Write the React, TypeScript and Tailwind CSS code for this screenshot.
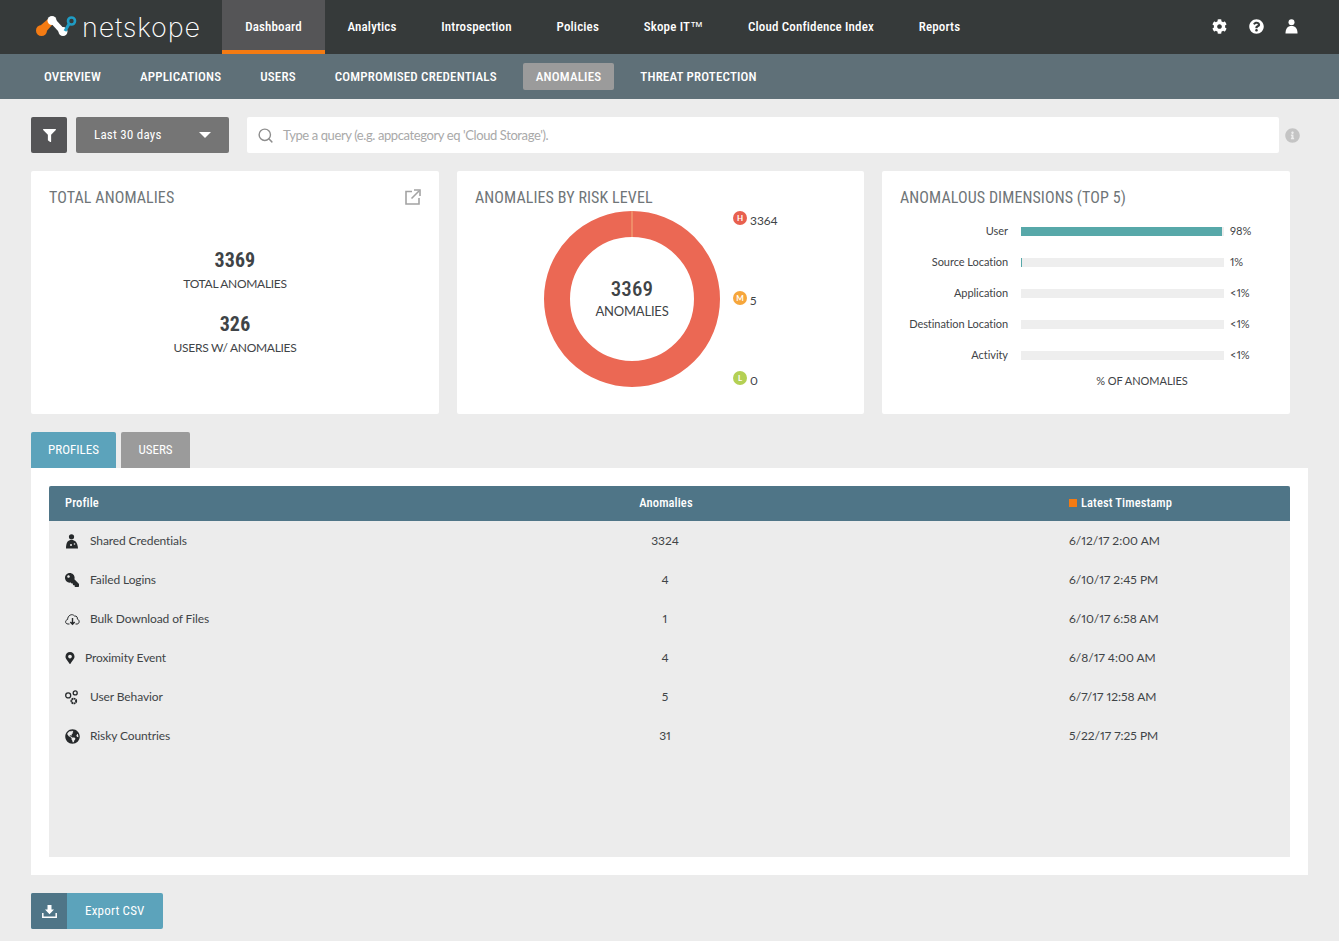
import { Search } from 'lucide-react';
import { FaCog, FaFilter, FaGlobeAmericas, FaInfoCircle, FaKey, FaMapMarkerAlt, FaQuestionCircle } from 'react-icons/fa';
import React from 'react';

const cond = "font-['Roboto_Condensed','Roboto',sans-serif]";

const topNav = ['Analytics', 'Introspection', 'Policies', 'Skope IT', 'Cloud Confidence Index', 'Reports'];
const subNav = ['OVERVIEW', 'APPLICATIONS', 'USERS', 'COMPROMISED CREDENTIALS', 'ANOMALIES', 'THREAT PROTECTION'];

const dimensions = [
    { label: 'User', pct: '98%', fill: 201 },
    { label: 'Source Location', pct: '1%', fill: 1 },
    { label: 'Application', pct: '<1%', fill: 0 },
    { label: 'Destination Location', pct: '<1%', fill: 0 },
    { label: 'Activity', pct: '<1%', fill: 0 },
];

function Logo() {
    return (
        <div className="flex w-[222px] items-center pl-[36px]">
            <svg width="41" height="21" viewBox="0 0 41 21" className="mb-[2px] shrink-0">
                <path d="M5 9 L12 3 L16 9 L9 17 Z" fill="#f47b13" />
                <circle cx="5.5" cy="14.5" r="5.5" fill="#f47b13" />
                <path d="M16 4 L27 16" stroke="#fff" strokeWidth="6" />
                <circle cx="16" cy="4.5" r="4.5" fill="#fff" />
                <circle cx="27" cy="15.5" r="4.5" fill="#fff" />
                <path d="M29 15 L33 8" stroke="#1f9cc4" strokeWidth="3" />
                <circle cx="35.5" cy="5" r="3.5" fill="none" stroke="#1f9cc4" strokeWidth="2.6" />
            </svg>
            <span className="ml-[5px] font-['Inter',sans-serif] text-[27px] leading-none font-extralight tracking-[0.8px] text-white">netskope</span>
        </div>
    );
}

function UserIcon() {
    return (
        <svg width="13" height="15" viewBox="0 0 13 15" fill="#fff">
            <circle cx="6.5" cy="3.2" r="3" />
            <path d="M0.5 14.5 C0.5 9.5 2.5 7 6.5 7 C10.5 7 12.5 9.5 12.5 14.5 Z" />
        </svg>
    );
}

function PopOutIcon() {
    return (
        <svg width="16" height="16" viewBox="0 0 16 16" fill="none" stroke="#a3a3a3" strokeWidth="1.6">
            <path d="M7 2.5 H1 V15 H14 V9" />
            <path d="M6.5 9.5 L14 2" />
            <path d="M9 1 H15 V7" />
        </svg>
    );
}

function ExportIcon() {
    return (
        <svg width="15" height="13" viewBox="0 0 15 13" fill="#fff">
            <path d="M5.5 0 H9.5 V4.5 H12 L7.5 9.2 L3 4.5 H5.5 Z" />
            <path d="M0.8 8 V12.2 H14.2 V8" fill="none" stroke="#fff" strokeWidth="1.5" />
        </svg>
    );
}

function CredentialIcon() {
    return (
        <svg width="14" height="15" viewBox="0 0 14 15" fill="#26292b">
            <circle cx="6.5" cy="2.8" r="2.6" />
            <path d="M1 14.5 C1 8 3 6 6.5 6 C10 6 12.5 8 13 14.5 Z" />
            <circle cx="6" cy="11" r="1" fill="#ececec" />
            <circle cx="9.5" cy="10" r="0.8" fill="#ececec" />
        </svg>
    );
}

function CloudIcon() {
    return (
        <svg width="15" height="14" viewBox="0 0 15 13" fill="none" stroke="#26292b" strokeWidth="1">
            <path d="M4.5 11.5 H3 C-0.2 11.5 0 7.5 2.6 7 C2.6 3 7 0.5 9.5 3.5 C12 3 12.7 5.5 12.3 6.5 C15 7.5 14.6 11.5 12 11.5 H10.5" />
            <path d="M7.5 5.5 V11.5 M5.3 9.4 L7.5 11.7 L9.7 9.4" strokeWidth="1.4" />
        </svg>
    );
}

function GearsIcon() {
    return (
        <svg width="14" height="15" viewBox="0 0 14 15" fill="none" stroke="#26292b" strokeWidth="1.3">
            <circle cx="3.2" cy="5.4" r="2.5" />
            <circle cx="10.2" cy="2.9" r="2" />
            <circle cx="8.8" cy="11" r="2.4" strokeDasharray="1.6 0.4" strokeWidth="1.9" />
        </svg>
    );
}

const rows = [
    { name: 'Shared Credentials', count: '3324', time: '6/12/17 2:00 AM', icon: <CredentialIcon /> },
    { name: 'Failed Logins', count: '4', time: '6/10/17 2:45 PM', icon: <FaKey className="-scale-x-100 text-[14px] text-[#26292b]" /> },
    { name: 'Bulk Download of Files', count: '1', time: '6/10/17 6:58 AM', icon: <CloudIcon /> },
    { name: 'Proximity Event', count: '4', time: '6/8/17 4:00 AM', icon: <FaMapMarkerAlt className="-ml-[1px] text-[12px] text-[#26292b]" />, short: true },
    { name: 'User Behavior', count: '5', time: '6/7/17 12:58 AM', icon: <GearsIcon /> },
    { name: 'Risky Countries', count: '31', time: '5/22/17 7:25 PM', icon: <FaGlobeAmericas className="text-[15px] text-[#26292b]" /> },
];

function Risk({ letter, value, color }: { letter: string; value: string; color: string }) {
    return (
        <div className="flex items-start">
            <span className={`flex h-[14px] w-[14px] items-center justify-center rounded-full text-[8px] font-bold text-white ${color}`}>{letter}</span>
            <span className="mt-[3px] ml-[3px] text-[12px] leading-[14px] text-[#3f4447]">{value}</span>
        </div>
    );
}

export default function App() {
    return (
        <div className="h-[941px] w-[1339px] overflow-hidden bg-[#ececec] font-['Lato',sans-serif] text-[#3f4447] proportional-nums">
            {/* Barra principal */}
            <header className={`flex h-[54px] bg-[#363a3a] text-white ${cond}`}>
                <Logo />
                <a className="flex w-[103px] items-center justify-center border-b-4 border-[#f47b13] bg-[#555557] pt-[4px] text-[13px] font-medium tracking-[0.15px]">Dashboard</a>
                <nav className="flex">
                    {topNav.map((item) => (
                        <a key={item} className="flex items-center px-[22.4px] text-[13px] font-medium tracking-[0.15px]">
                            {item}
                            {item === 'Skope IT' && <span className="font-['Liberation_Sans',sans-serif]">™</span>}
                        </a>
                    ))}
                </nav>
                <div className="ml-auto flex items-center gap-[21.5px] pr-[41px] pb-[2px]">
                    <FaCog className="text-[15px]" />
                    <FaQuestionCircle className="text-[15px]" />
                    <UserIcon />
                </div>
            </header>

            {/* Submenu */}
            <div className={`flex h-[45px] items-center gap-[13px] bg-[#5f7078] pl-[31px] text-white ${cond}`}>
                {subNav.map((item) => (
                    <a key={item} className={`flex h-[27px] items-center rounded-[2px] px-[13px] text-[13px] font-medium tracking-[0.18px] ${item === 'ANOMALIES' ? 'bg-[#9b9b9b]' : ''}`}>
                        {item}
                    </a>
                ))}
            </div>

            {/* Filtros */}
            <div className="flex items-center pt-[18px] pl-[31px]">
                <button className="flex h-[36px] w-[36px] items-center justify-center rounded-[2px] bg-[#555557] text-white">
                    <FaFilter className="text-[13px]" />
                </button>
                <button className={`ml-[9px] flex h-[36px] w-[153px] items-center justify-between rounded-[2px] bg-[#757575] pr-[18px] pl-[18px] text-[13px] tracking-[0.2px] text-white ${cond}`}>
                    Last 30 days
                    <span className="h-0 w-0 border-x-[6px] border-t-[6px] border-x-transparent border-t-white" />
                </button>
                <div className="ml-[18px] flex h-[36px] w-[1032px] items-center rounded-[2px] bg-white pl-[10px] text-[13px] text-[#a9a9a9]">
                    <Search size={17} strokeWidth={2} className="text-[#8e8e8e]" />
                    <span className="mt-[1px] ml-[9px] tracking-[-0.4px]">Type a query (e.g. appcategory eq 'Cloud Storage').</span>
                </div>
                <FaInfoCircle className="ml-[6px] text-[15px] text-[#c4c4c4]" />
            </div>

            {/* Tarjetas */}
            <div className="mt-[18px] ml-[31px] flex gap-[18px]">
                <section className="relative h-[243px] w-[408px] rounded-[2px] bg-white pt-[16px] pl-[18px]">
                    <h2 className={`text-[16px] leading-[21px] tracking-[0.1px] text-[#6f7578] ${cond}`}>TOTAL ANOMALIES</h2>
                    <div className="absolute top-[18px] right-[18px]">
                        <PopOutIcon />
                    </div>
                    <div className="mt-[38px] pr-[18px] text-center">
                        <p className={`text-[20px] leading-[28px] font-bold text-[#3f4447] ${cond}`}>3369</p>
                        <p className="mt-[1px] text-[12px] leading-[18px] tracking-[-0.3px]">TOTAL ANOMALIES</p>
                        <p className={`mt-[17px] text-[20px] leading-[28px] font-bold text-[#3f4447] ${cond}`}>326</p>
                        <p className="mt-[1px] text-[12px] leading-[18px] tracking-[-0.3px]">USERS W/ ANOMALIES</p>
                    </div>
                </section>

                <section className="h-[243px] w-[407px] rounded-[2px] bg-white pt-[16px] pl-[18px]">
                    <h2 className={`text-[16px] leading-[21px] tracking-[0.1px] text-[#6f7578] ${cond}`}>ANOMALIES BY RISK LEVEL</h2>
                    <div className="mt-[3px] ml-[69px] flex">
                        <div className="relative h-[176px] w-[176px]">
                            <svg width="176" height="176" viewBox="0 0 176 176">
                                <circle cx="88" cy="88" r="75" fill="none" stroke="#eb6854" strokeWidth="26" />
                                <path d="M88 0 V26" stroke="#f4b07c" strokeWidth="1" />
                            </svg>
                            <div className="absolute inset-0 flex -translate-y-[1px] flex-col items-center justify-center text-center">
                                <span className={`text-[21px] leading-[26px] font-medium ${cond}`}>3369</span>
                                <span className="text-[13px] leading-[18px] tracking-[-0.2px]">ANOMALIES</span>
                            </div>
                        </div>
                        <div className="ml-[13px] flex h-[177px] flex-col justify-between">
                            <Risk letter="H" value="3364" color="bg-[#e8604f]" />
                            <Risk letter="M" value="5" color="bg-[#f6a63c]" />
                            <Risk letter="L" value="0" color="bg-[#b4d054]" />
                        </div>
                    </div>
                </section>

                <section className="h-[243px] w-[408px] rounded-[2px] bg-white pt-[16px] pl-[18px]">
                    <h2 className={`text-[16px] leading-[21px] tracking-[0.1px] text-[#6f7578] ${cond}`}>ANOMALOUS DIMENSIONS (TOP 5)</h2>
                    <div className="mt-[14px] flex flex-col gap-[13px]">
                        {dimensions.map((d) => (
                            <div key={d.label} className="flex h-[18px] items-center text-[11px]">
                                <span className="w-[108px] text-right tracking-[-0.05px] whitespace-nowrap">{d.label}</span>
                                <div className="ml-[13px] h-[9px] w-[203px] bg-[#eeeeee]">
                                    <div className="h-full bg-[#57a8a9]" style={{ width: d.fill }} />
                                </div>
                                <span className="ml-[6px]">{d.pct}</span>
                            </div>
                        ))}
                    </div>
                    <p className="mt-[9px] ml-[142px] w-[200px] text-center text-[11px] tracking-[-0.05px]">% OF ANOMALIES</p>
                </section>
            </div>

            {/* Pestanas */}
            <div className={`mt-[18px] ml-[31px] flex gap-[5px] text-[13px] text-white ${cond}`}>
                <button className="h-[36px] w-[85px] rounded-t-[2px] bg-[#5ca3bb]">PROFILES</button>
                <button className="h-[36px] w-[69px] rounded-t-[2px] bg-[#9b9b9b]">USERS</button>
            </div>

            <div className="ml-[31px] h-[407px] w-[1277px] bg-white p-[18px]">
                <div className="h-[371px] bg-[#ececec]">
                    <div className={`grid h-[35px] grid-cols-[421px_392px_1fr] items-center rounded-t-[2px] bg-[#4f7587] pb-[1px] text-[12.5px] font-medium tracking-[0.1px] text-white ${cond}`}>
                        <span className="pl-[16px]">Profile</span>
                        <span className="text-center">Anomalies</span>
                        <span className="flex items-center pl-[207px]">
                            <span className="mr-[4px] h-[8px] w-[8px] bg-[#f47b13]" />
                            Latest Timestamp
                        </span>
                    </div>
                    {rows.map((r) => (
                        <div key={r.name} className="grid h-[39px] grid-cols-[421px_392px_1fr] items-center pt-[1px] text-[12px]">
                            <span className="flex items-center pl-[16px] tracking-[-0.1px]">
                                <span className={`flex h-[16px] shrink-0 items-center ${r.short ? 'w-[20px]' : 'w-[25px]'}`}>{r.icon}</span>
                                {r.name}
                            </span>
                            <span className="pr-[2px] text-center">{r.count}</span>
                            <span className="pl-[207px]">{r.time}</span>
                        </div>
                    ))}
                </div>
            </div>

            {/* Exportar */}
            <button className={`mt-[18px] ml-[31px] flex h-[36px] w-[132px] items-center overflow-hidden rounded-[2px] bg-[#5ca3bb] text-[13px] tracking-[0.2px] text-white ${cond}`}>
                <span className="flex h-full w-[36px] items-center justify-center bg-[#4f7587]">
                    <ExportIcon />
                </span>
                <span className="ml-[18px]">Export CSV</span>
            </button>
        </div>
    );
}
